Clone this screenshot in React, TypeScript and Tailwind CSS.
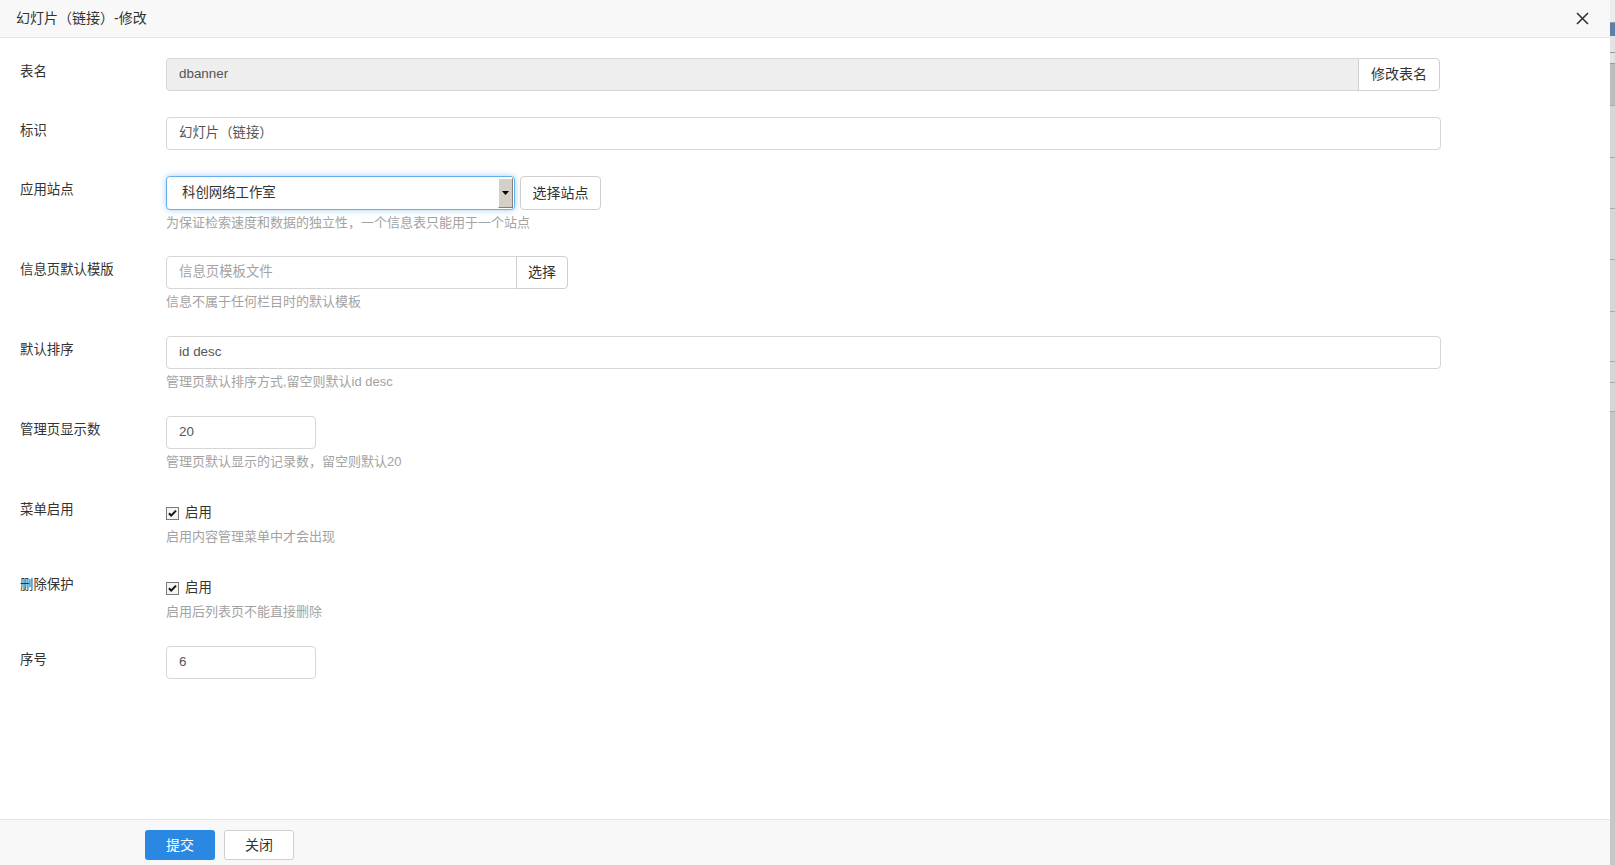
import React from "react";

const label = "w-[166px] shrink-0 pl-[20px] pt-[4px] leading-[20px] text-[13.4px] text-[#333]";
const input =
  "h-[33px] border border-[#d6d6d6] rounded-[4px] px-[12px] flex items-center text-[13.4px] text-[#555]";
const help = "mt-[4px] leading-[17px] text-[13px] text-[#a3a3a3]";
const btn =
  "h-[33px] border border-[#cfcfcf] bg-white flex items-center justify-center text-[14px] text-[#333]";

function Check() {
  return (
    <svg width="13" height="13" viewBox="0 0 13 13" className="shrink-0">
      <rect x="0.5" y="0.5" width="12" height="12" fill="#f4f4f4" stroke="#7a7a7a" />
      <path d="M3 6.2 L5.2 8.6 L10 3.6" fill="none" stroke="#111" strokeWidth="2" />
    </svg>
  );
}

function Row({ name, children, tight }: { name: string; children: React.ReactNode; tight?: boolean }) {
  return (
    <div className={tight ? "flex mb-[25px]" : "flex mb-[26px]"}>
      <div className={label}>{name}</div>
      <div className="w-[1275px]">{children}</div>
    </div>
  );
}

function CheckRow({ name, hint }: { name: string; hint: string }) {
  return (
    <Row name={name}>
      <div className="pt-[7px] h-[28px] flex items-center gap-[6px] text-[13.4px] text-[#333]">
        <Check />
        <span>启用</span>
      </div>
      <div className={help}>{hint}</div>
    </Row>
  );
}

export default function App() {
  return (
    <div className="flex w-[1615px] h-[865px] overflow-hidden [font-family:'Liberation_Sans','Noto_Sans_CJK_SC',sans-serif]">
      <div className="flex flex-col w-[1610px] bg-white">
        {/* header */}
        <div className="h-[38px] shrink-0 bg-[#f8f8f8] border-b border-[#e6e6e6] flex items-center justify-between pl-[16px] pr-[21px]">
          <span className="text-[14px] text-[#333]">幻灯片（链接）-修改</span>
          <svg width="13" height="13" viewBox="0 0 13 13">
            <path d="M1 1 L12 12 M12 1 L1 12" stroke="#333" strokeWidth="1.6" />
          </svg>
        </div>

        {/* body */}
        <div className="flex-1 pt-[20px]">
          <Row name="表名">
            <div className="flex">
              <div className={`${input} w-[1193px] bg-[#eeeeee] rounded-r-none`}>dbanner</div>
              <div className={`${btn} w-[82px] -ml-px rounded-r-[4px]`}>修改表名</div>
            </div>
          </Row>

          <Row name="标识">
            <div className={`${input} w-[1275px] bg-white`}>幻灯片（链接）</div>
          </Row>

          <Row name="应用站点" tight>
            <div className="flex gap-[5px]">
              <div className="relative h-[34px] w-[349px] border border-[#66afe9] rounded-[4px] shadow-[0_0_6px_rgba(102,175,233,0.6)] flex items-center pl-[15px] text-[13.4px] text-[#333] bg-white">
                科创网络工作室
                <div className="absolute right-[1px] top-[1px] bottom-[1px] w-[15px] bg-[#d4d0c8] border-t border-l border-t-white border-l-white border-r border-b border-r-[#808080] border-b-[#808080] flex items-center justify-center">
                  <svg width="7" height="4" viewBox="0 0 7 4">
                    <path d="M0 0 H7 L3.5 4 Z" fill="#000" />
                  </svg>
                </div>
              </div>
              <div className={`${btn} w-[81px] h-[34px] rounded-[4px]`}>选择站点</div>
            </div>
            <div className={help}>为保证检索速度和数据的独立性，一个信息表只能用于一个站点</div>
          </Row>

          <Row name="信息页默认模版">
            <div className="flex">
              <div className={`${input} w-[351px] rounded-r-none bg-white text-[#a3a3a3]`}>信息页模板文件</div>
              <div className={`${btn} w-[52px] -ml-px rounded-r-[4px]`}>选择</div>
            </div>
            <div className={help}>信息不属于任何栏目时的默认模板</div>
          </Row>

          <Row name="默认排序">
            <div className={`${input} w-[1275px] bg-white`}>id desc</div>
            <div className={help}>管理页默认排序方式,留空则默认id desc</div>
          </Row>

          <Row name="管理页显示数">
            <div className={`${input} w-[150px] bg-white`}>20</div>
            <div className={help}>管理页默认显示的记录数，留空则默认20</div>
          </Row>

          <CheckRow name="菜单启用" hint="启用内容管理菜单中才会出现" />
          <CheckRow name="删除保护" hint="启用后列表页不能直接删除" />

          <Row name="序号">
            <div className={`${input} w-[150px] bg-white`}>6</div>
          </Row>
        </div>

        {/* footer */}
        <div className="h-[46px] shrink-0 bg-[#f8f8f8] border-t border-[#e6e6e6] flex items-start gap-[9px] pl-[145px] pt-[10px]">
          <div className="w-[70px] h-[30px] rounded-[3px] bg-[#2b88e2] text-white text-[14px] flex items-center justify-center">
            提交
          </div>
          <div className="w-[70px] h-[30px] rounded-[3px] border border-[#cfcfcf] bg-white text-[#333] text-[14px] flex items-center justify-center">
            关闭
          </div>
        </div>
      </div>

      {/* background page edge */}
      <div className="w-[5px] flex flex-col bg-[#c7c7c7]">
        <div className="h-[23px] bg-[#ececec] border-b border-[#999]" />
        <div className="h-[13px] bg-[#5d7fa8]" />
        <div className="h-[17px] border-b border-[#999] bg-[#e3e3e3]" />
        <div className="h-[11px] border-b border-[#999] bg-[#e3e3e3]" />
        <div className="h-[42px] bg-[#bdbdbd] border-b border-[#aaa]" />
        <div className="h-[52px] bg-[#d6d6d6] border-b border-[#aaa]" />
        <div className="h-[51px] bg-[#d6d6d6] border-b border-[#aaa]" />
        <div className="h-[51px] bg-[#d6d6d6] border-b border-[#aaa]" />
        <div className="h-[52px] bg-[#d6d6d6] border-b border-[#aaa]" />
        <div className="h-[50px] bg-[#d6d6d6] border-b border-[#aaa]" />
        <div className="h-[21px] bg-[#d6d6d6] border-b border-[#aaa]" />
        <div className="h-[29px] bg-[#d6d6d6] border-b border-[#aaa]" />
      </div>
    </div>
  );
}
